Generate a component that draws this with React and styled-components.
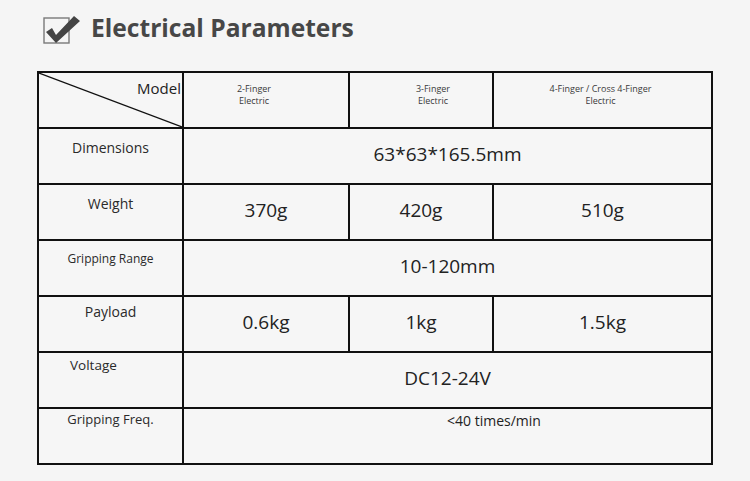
import React from "react";
import styled, { createGlobalStyle } from "styled-components";

const GlobalStyle = createGlobalStyle`
  html, body {
    margin: 0;
    padding: 0;
    background: #f5f5f5;
  }
  body {
    font-family: "Open Sans", "Noto Sans", sans-serif;
    color: #222;
  }
`;

const Page = styled.div`
  width: 750px;
  height: 481px;
  box-sizing: border-box;
  padding: 12px 0 0 37px;
  background: #f5f5f5;
  overflow: hidden;
`;

const Heading = styled.div`
  display: flex;
  align-items: center;
  gap: 10px;
  height: 34px;
  margin-left: 6px;
  margin-bottom: 25px;
`;

const Title = styled.h1`
  margin: 0 0 3px 0;
  font-size: 24.6px;
  font-weight: 700;
  color: #474747;
`;

const Table = styled.table`
  border-collapse: collapse;
  table-layout: fixed;
  width: 674px;
  background: #f6f6f6;
`;

const Row = styled.tr`
  height: 56px;
`;

const Cell = styled.td`
  border: 2px solid #111;
  padding: 0 0 3px 0;
  text-align: center;
  vertical-align: middle;
  font-size: 19px;
  color: #222;
  line-height: 1.3;
`;

const NoteCell = styled.td`
  border: 2px solid #111;
  padding: 3px 0 0 263px;
  text-align: left;
  vertical-align: top;
  font-size: 14px;
  color: #222;
  line-height: 1.3;
`;

const Label = styled.td`
  border: 2px solid #111;
  padding: ${(p) => p.$pad || "10px 0 0 0"};
  text-align: ${(p) => p.$align || "center"};
  vertical-align: top;
  font-size: ${(p) => p.$size || 14}px;
  color: #2a2a2a;
  line-height: 1.3;
`;

const CornerCell = styled.td`
  border: 2px solid #111;
  padding: 0;
  position: relative;
  overflow: hidden;
`;

const Diagonal = styled.svg`
  position: absolute;
  inset: 0;
  width: 100%;
  height: 100%;
`;

const ModelText = styled.span`
  position: absolute;
  right: 1px;
  top: 5px;
  font-size: 15px;
  color: #222;
`;

const ProductName = styled.td`
  border: 2px solid #111;
  padding: ${(p) => `10px ${p.$shift < 0 ? -p.$shift * 2 : 0}px 0 ${p.$shift > 0 ? p.$shift * 2 : 0}px`};
  text-align: center;
  vertical-align: top;
  font-size: 9px;
  line-height: 12px;
  color: #3a3a3a;
`;

function CheckIcon() {
  return (
    <svg width="38" height="32" viewBox="0 0 38 32">
      <rect x="1" y="5" width="25" height="25" fill="none" stroke="#7a7a7a" strokeWidth="1.4" />
      <path d="M3 19 L9 15 L13 22 L31 3 L37 8 L13 30 Z" fill="#444" />
    </svg>
  );
}

export default function App() {
  return (
    <Page>
      <GlobalStyle />
      <Heading>
        <CheckIcon />
        <Title>Electrical Parameters</Title>
      </Heading>
      <Table>
        <colgroup>
          <col style={{ width: 145 }} />
          <col style={{ width: 166 }} />
          <col style={{ width: 144 }} />
          <col style={{ width: 219 }} />
        </colgroup>
        <tbody>
          <Row>
            <CornerCell>
              <Diagonal viewBox="0 0 100 100" preserveAspectRatio="none">
                <line x1="0" y1="0" x2="100" y2="100" stroke="#111" strokeWidth="1.2" vectorEffect="non-scaling-stroke" />
              </Diagonal>
              <ModelText>Model</ModelText>
            </CornerCell>
            <ProductName $shift={-12}>2-Finger<br />Electric</ProductName>
            <ProductName $shift={12}>3-Finger<br />Electric</ProductName>
            <ProductName $shift={-2}>4-Finger / Cross 4-Finger<br />Electric</ProductName>
          </Row>
          <Row>
            <Label>Dimensions</Label>
            <Cell colSpan={3}>63*63*165.5mm</Cell>
          </Row>
          <Row>
            <Label>Weight</Label>
            <Cell>370g</Cell>
            <Cell>420g</Cell>
            <Cell>510g</Cell>
          </Row>
          <Row>
            <Label $size={12}>Gripping Range</Label>
            <Cell colSpan={3}>10-120mm</Cell>
          </Row>
          <Row>
            <Label $pad="6px 0 0 0">Payload</Label>
            <Cell>0.6kg</Cell>
            <Cell>1kg</Cell>
            <Cell>1.5kg</Cell>
          </Row>
          <Row>
            <Label $align="left" $pad="4px 0 0 31px" $size={13.5}>Voltage</Label>
            <Cell colSpan={3}>DC12-24V</Cell>
          </Row>
          <Row>
            <Label $size={13} $pad="2px 0 0 0">Gripping Freq.</Label>
            <NoteCell colSpan={3}>&lt;40 times/min</NoteCell>
          </Row>
        </tbody>
      </Table>
    </Page>
  );
}
